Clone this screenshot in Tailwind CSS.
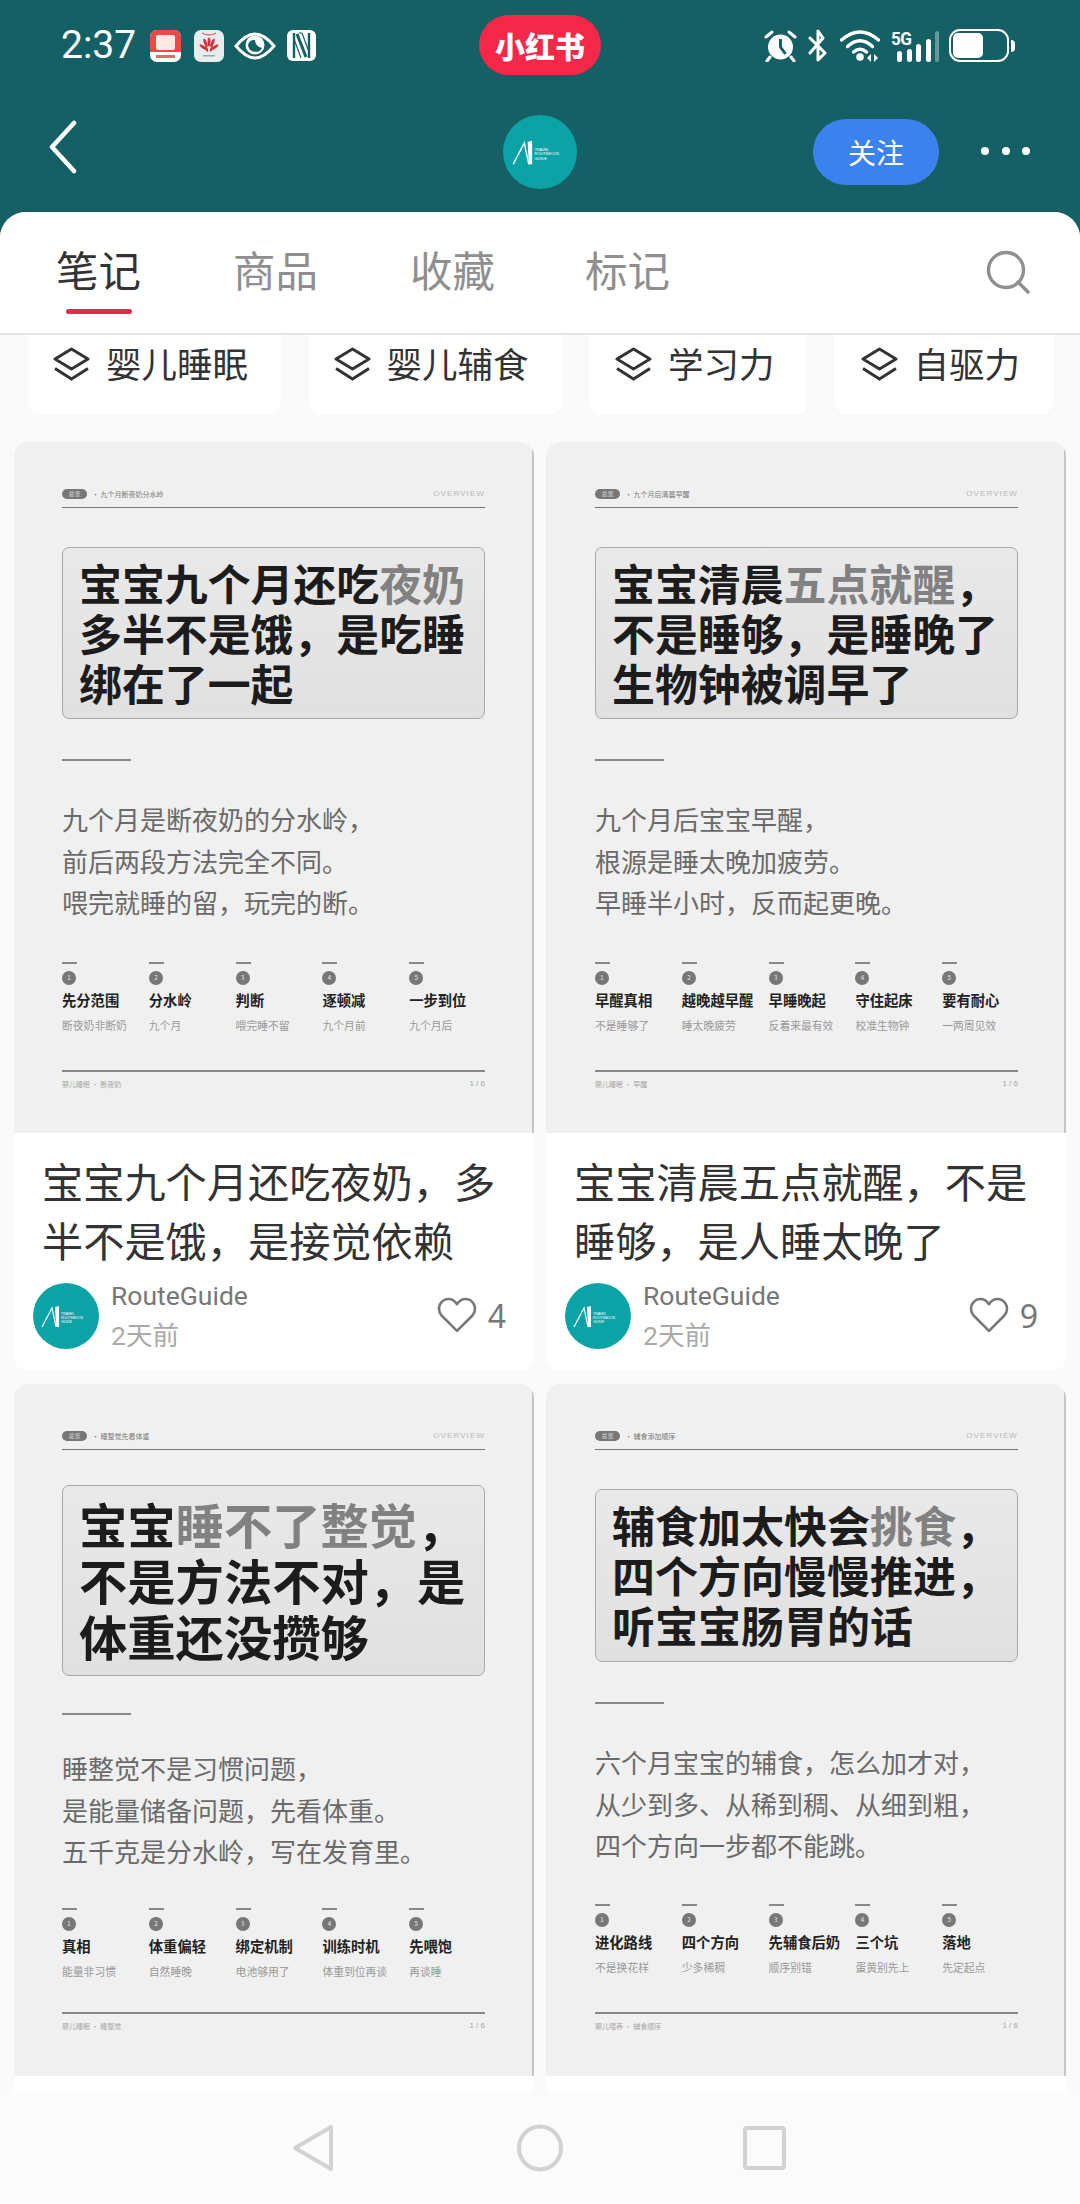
<!DOCTYPE html>
<html lang="zh-CN">
<head>
<meta charset="utf-8">
<title>RouteGuide</title>
<script src="https://cdn.jsdelivr.net/npm/@tailwindcss/browser@4"></script>
</head>
<body class="m-0">
<div class="relative w-[1080px] h-[2204px] overflow-hidden flex flex-col bg-[#156064] font-['Noto_Sans_CJK_SC','Noto_Sans',sans-serif]">

  <!-- header -->
  <header class="relative h-[212px] shrink-0 text-white">
    <div class="relative flex items-center h-[90px] pl-[61px] pt-[1px]">
      <span class="font-['Roboto',sans-serif] text-[39px] leading-none w-[89px]">2:37</span>
      <svg class="w-[31px] h-[32px]" viewBox="0 0 31 32"><rect width="31" height="32" rx="7" fill="#fff"/><path d="M0 7a7 7 0 0 1 7-7h17a7 7 0 0 1 7 7v15H0z" fill="#ee4a45"/><rect x="6" y="5" width="19" height="15" rx="2" fill="#fde9e6"/><rect x="6" y="25" width="19" height="3" fill="#e46a66"/></svg>
      <svg class="ml-[13px] w-[30px] h-[32px]" viewBox="0 0 30 32"><rect width="30" height="32" rx="7" fill="#e8eced"/><path d="M8 3q7 4 14 0" fill="none" stroke="#d8464a" stroke-width="1"/><g fill="#d3333c"><ellipse cx="15" cy="12" rx="1.5" ry="4.5"/><ellipse cx="11.5" cy="13" rx="1.5" ry="4.5" transform="rotate(-22 11.5 13)"/><ellipse cx="18.5" cy="13" rx="1.5" ry="4.5" transform="rotate(22 18.5 13)"/><ellipse cx="9" cy="17" rx="1.4" ry="4" transform="rotate(-55 9 17)"/><ellipse cx="21" cy="17" rx="1.4" ry="4" transform="rotate(55 21 17)"/><ellipse cx="12.5" cy="19" rx="1.3" ry="3" transform="rotate(-30 12.5 19)"/><ellipse cx="17.5" cy="19" rx="1.3" ry="3" transform="rotate(30 17.5 19)"/></g><rect x="9" y="25" width="12" height="1.5" fill="#9aa"/></svg>
      <svg class="ml-[10px] w-[42px] h-[28px]" viewBox="0 0 42 28"><path d="M2 14Q12 2 21 2T40 14Q30 26 21 26T2 14Z" fill="none" stroke="#fff" stroke-width="3"/><circle cx="21" cy="13" r="9.5" fill="#fff"/><path d="M14 13a7.5 7.5 0 0 0 14 3 8 8 0 0 1-7-8 6 6 0 0 0-7 5z" fill="#156064"/></svg>
      <svg class="ml-[11px] w-[29px] h-[31px]" viewBox="0 0 29 31"><rect width="29" height="31" rx="6" fill="#fff"/><path d="M7 3v25M22 3v25" stroke="#156064" stroke-width="2.4"/><path d="M10 4l9 23" stroke="#156064" stroke-width="3" fill="none"/><path d="M12 3h3l7 19M7 9l7 19" fill="none" stroke="#156064" stroke-width="1.2"/></svg>

      <div class="absolute left-[479px] top-[15px] w-[122px] h-[60px] rounded-full bg-[#f5284a] flex items-center justify-center text-[30px] leading-none font-black">小红书</div>

      <div class="absolute left-[764px] top-[29px] flex">
        <svg class="w-[33px] h-[33px]" viewBox="0 0 33 33"><circle cx="16.5" cy="18" r="12.5" fill="#fff"/><path d="M16.5 10v8l5 7" fill="none" stroke="#156064" stroke-width="3"/><path d="M2 8l6-5M31 8l-6-5M6 28l-3 4M27 28l3 4" stroke="#fff" stroke-width="3" stroke-linecap="round"/></svg>
        <svg class="ml-[11px] w-[20px] h-[33px]" viewBox="0 0 20 33"><path d="M2 24L15 9 10 2v29l7-7L2 9" fill="none" stroke="#fff" stroke-width="3" stroke-linejoin="round" stroke-linecap="round"/></svg>
        <svg class="ml-[12px] w-[40px] h-[33px]" viewBox="0 0 40 33"><path d="M1.5 11Q20-5 38.5 11" fill="none" stroke="#fff" stroke-width="3.4" stroke-linecap="round"/><path d="M7.5 17.500Q20 6 32.500 17.500" fill="none" stroke="#fff" stroke-width="3.4" stroke-linecap="round"/><path d="M13.500 23Q20 17.500 26.500 23" fill="none" stroke="#fff" stroke-width="3.4" stroke-linecap="round"/><circle cx="20" cy="28" r="3.800" fill="#fff"/><path d="M31 25l-4 4 4 4zM34 25l4 4-4 4z" fill="#fff"/></svg>
      </div>
      <div class="absolute left-[891px] top-[29px] w-[50px] h-[33px]">
        <span class="absolute left-[0px] top-[1px] font-['Roboto',sans-serif] text-[18px] leading-[17px] font-bold tracking-[-0.5px] scale-x-[0.95] origin-left">5G</span>
        <div class="absolute left-[6px] bottom-[0px] flex items-end gap-[4.500px]">
          <i class="block w-[5px] h-[11px] rounded-sm bg-white"></i>
          <i class="block w-[5px] h-[13px] rounded-sm bg-white"></i>
          <i class="block w-[5px] h-[18px] rounded-sm bg-white"></i>
          <i class="block w-[5px] h-[23px] rounded-sm bg-white"></i>
          <i class="block w-[4px] h-[31px] rounded-sm bg-white/35"></i>
        </div>
      </div>
      <div class="absolute left-[949px] top-[29px] flex items-center">
        <div class="w-[60px] h-[33px] rounded-[11px] border-[2.5px] border-white p-[2px]"><div class="w-[30px] h-full rounded-[5px] bg-white"></div></div>
        <div class="ml-[2px] w-[4px] h-[12px] rounded-r-sm bg-white"></div>
      </div>
    </div>

    <div class="relative flex items-center justify-between h-[122px] pl-[48px] pr-[50px]">
      <svg class="w-[30px] h-[54px] mb-[8px]" viewBox="0 0 30 54"><path d="M26 3L4 27l22 24" fill="none" stroke="#fff" stroke-width="4.500" stroke-linecap="round" stroke-linejoin="round"/></svg>
      <svg class="absolute left-[503px] top-[25px] w-[74px] h-[74px]" viewBox="0 0 66 66"><circle cx="33" cy="33" r="33" fill="#0ca3a6"/><path d="M9 44L19 25l4 19" fill="none" stroke="#fff" stroke-width="1.200"/><path d="M22 24l4-1v21h-3z" fill="#fff"/><text x="28" y="32" font-size="3.500" fill="#fff" font-family="Liberation Sans">TRAVEL</text><text x="28" y="36" font-size="3.500" fill="#fff" font-family="Liberation Sans">ROUTEBOOK</text><text x="28" y="40" font-size="3.500" fill="#fff" font-family="Liberation Sans">GUIDE</text></svg>
      <div class="ml-auto flex items-center">
        <div class="mt-[2px] w-[126px] h-[66px] rounded-full bg-[#3b82ee] flex items-center justify-center text-[28px] leading-none">关注</div>
        <div class="ml-[42px] flex gap-[12.500px]">
          <i class="block w-[8px] h-[8px] rounded-full bg-white"></i>
          <i class="block w-[8px] h-[8px] rounded-full bg-white"></i>
          <i class="block w-[8px] h-[8px] rounded-full bg-white"></i>
        </div>
      </div>
    </div>
  </header>

  <!-- sheet -->
  <div class="flex-1 min-h-0 flex flex-col rounded-t-[26px] overflow-hidden bg-[#fafafa]">
    <div class="relative h-[123px] shrink-0 bg-white border-b-2 border-[#e6e6e6] text-[42.500px] leading-none text-[#8f8f8f]">
      <span class="absolute left-[56px] top-[36px] text-[#333]">笔记</span>
      <span class="absolute left-[233px] top-[36px]">商品</span>
      <span class="absolute left-[410px] top-[36px]">收藏</span>
      <span class="absolute left-[585px] top-[36px]">标记</span>
      <i class="absolute left-[66px] top-[97px] block w-[66px] h-[5px] rounded-full bg-[#e8294f]"></i>
      <svg class="absolute left-[986px] top-[38px] w-[44px] h-[44px]" viewBox="0 0 44 44"><circle cx="20" cy="20" r="17.500" fill="none" stroke="#8f8f8f" stroke-width="3.400"/><path d="M32 32l10 10" stroke="#8f8f8f" stroke-width="3.400" stroke-linecap="round"/></svg>
    </div>

    <div class="flex-1 min-h-0 overflow-hidden">
      <!-- chips -->
      <div class="flex gap-[27.500px] pl-[28px] h-[79px] text-[35.500px] leading-none text-[#333]">
        <div class="w-[253px] h-full rounded-b-[12px] bg-white flex items-start pt-[11px] pl-[25px] gap-[16px]">
          <svg class="mt-[1px] w-[37px] h-[34px] shrink-0" viewBox="0 0 37 34"><path d="M18.500 2L35 12 18.500 22 2 12z" fill="none" stroke="#333" stroke-width="3" stroke-linejoin="round"/><path d="M2 21.500L18.500 32 35 21.500" fill="none" stroke="#333" stroke-width="3"/></svg>
          <span class="-mt-[1.500px] whitespace-nowrap">婴儿睡眠</span>
        </div>
        <div class="w-[253px] h-full rounded-b-[12px] bg-white flex items-start pt-[11px] pl-[25px] gap-[16px]">
          <svg class="mt-[1px] w-[37px] h-[34px] shrink-0" viewBox="0 0 37 34"><path d="M18.500 2L35 12 18.500 22 2 12z" fill="none" stroke="#333" stroke-width="3" stroke-linejoin="round"/><path d="M2 21.500L18.500 32 35 21.500" fill="none" stroke="#333" stroke-width="3"/></svg>
          <span class="-mt-[1.500px] whitespace-nowrap">婴儿辅食</span>
        </div>
        <div class="w-[218px] h-full rounded-b-[12px] bg-white flex items-start pt-[11px] pl-[26px] gap-[16px]">
          <svg class="mt-[1px] w-[37px] h-[34px] shrink-0" viewBox="0 0 37 34"><path d="M18.500 2L35 12 18.500 22 2 12z" fill="none" stroke="#333" stroke-width="3" stroke-linejoin="round"/><path d="M2 21.500L18.500 32 35 21.500" fill="none" stroke="#333" stroke-width="3"/></svg>
          <span class="-mt-[1.500px] whitespace-nowrap">学习力</span>
        </div>
        <div class="w-[218px] h-full rounded-b-[12px] bg-white flex items-start pt-[11px] pl-[26px] gap-[16px]">
          <svg class="mt-[1px] w-[37px] h-[34px] shrink-0" viewBox="0 0 37 34"><path d="M18.500 2L35 12 18.500 22 2 12z" fill="none" stroke="#333" stroke-width="3" stroke-linejoin="round"/><path d="M2 21.500L18.500 32 35 21.500" fill="none" stroke="#333" stroke-width="3"/></svg>
          <span class="-mt-[1.500px] whitespace-nowrap">自驱力</span>
        </div>
      </div>

      <!-- cards -->
      <div class="grid grid-cols-[520px_520px] gap-x-[12px] gap-y-[13px] px-[14px] pt-[28px]">

        <!-- card 1 -->
        <article class="rounded-[14px] overflow-hidden bg-white">
          <div class="h-[691px] flex flex-col bg-[#f0f0f0] border-r-2 border-[#c6c6c6] pl-[48px] pr-[47px] pt-[47px] pb-[43px]">
            <div class="flex items-center justify-between h-[19px] pb-[9px] border-b-[1.500px] border-[#777] whitespace-nowrap">
              <div class="flex items-center gap-[5px] text-[7px] leading-[10px] text-[#777]"><span class="w-[25px] h-[10px] rounded-full bg-[#777] text-center text-[6px] text-[#ddd]">总览</span>· 九个月断夜奶分水岭</div>
              <span class="font-['Liberation_Sans',sans-serif] text-[8px] leading-[10px] tracking-[1.100px] text-[#b8b8b8]">OVERVIEW</span>
            </div>
            <div class="mt-[39px] h-[172px] rounded-[7px] border border-[#a8a8a8] bg-linear-to-b from-[#e9e9e9] to-[#e0e0e0] pl-[16px] pt-[8.500px] text-[42.900px] leading-[50px] font-bold text-[#1c1c1c] whitespace-nowrap">宝宝九个月还吃<span class="text-[#818181]">夜奶</span><br>多半不是饿，是吃睡<br>绑在了一起</div>
            <i class="block mt-[40px] w-[69px] h-[2px] bg-[#888]"></i>
            <p class="mt-[37px] text-[26px] leading-[41.500px] text-[#6a6a6a] whitespace-nowrap">九个月是断夜奶的分水岭，<br>前后两段方法完全不同。<br>喂完就睡的留，玩完的断。</p>
            <div class="mt-[39.500px] grid grid-cols-[repeat(5,86.800px)] whitespace-nowrap">
              <div><i class="block w-[15px] h-[2px] bg-[#888]"></i><span class="block mt-[7px] w-[14px] h-[14px] rounded-full bg-[#777] text-center text-[6px] leading-[14px] text-[#eee]">1</span><b class="block mt-[5px] text-[14.300px] leading-[20px] text-[#222]">先分范围</b><span class="block mt-[7.500px] text-[10.800px] leading-[14px] text-[#999]">断夜奶非断奶</span></div>
              <div><i class="block w-[15px] h-[2px] bg-[#888]"></i><span class="block mt-[7px] w-[14px] h-[14px] rounded-full bg-[#777] text-center text-[6px] leading-[14px] text-[#eee]">2</span><b class="block mt-[5px] text-[14.300px] leading-[20px] text-[#222]">分水岭</b><span class="block mt-[7.500px] text-[10.800px] leading-[14px] text-[#999]">九个月</span></div>
              <div><i class="block w-[15px] h-[2px] bg-[#888]"></i><span class="block mt-[7px] w-[14px] h-[14px] rounded-full bg-[#777] text-center text-[6px] leading-[14px] text-[#eee]">3</span><b class="block mt-[5px] text-[14.300px] leading-[20px] text-[#222]">判断</b><span class="block mt-[7.500px] text-[10.800px] leading-[14px] text-[#999]">喂完睡不留</span></div>
              <div><i class="block w-[15px] h-[2px] bg-[#888]"></i><span class="block mt-[7px] w-[14px] h-[14px] rounded-full bg-[#777] text-center text-[6px] leading-[14px] text-[#eee]">4</span><b class="block mt-[5px] text-[14.300px] leading-[20px] text-[#222]">逐顿减</b><span class="block mt-[7.500px] text-[10.800px] leading-[14px] text-[#999]">九个月前</span></div>
              <div><i class="block w-[15px] h-[2px] bg-[#888]"></i><span class="block mt-[7px] w-[14px] h-[14px] rounded-full bg-[#777] text-center text-[6px] leading-[14px] text-[#eee]">5</span><b class="block mt-[5px] text-[14.300px] leading-[20px] text-[#222]">一步到位</b><span class="block mt-[7.500px] text-[10.800px] leading-[14px] text-[#999]">九个月后</span></div>
            </div>
            <div class="mt-auto flex justify-between items-center border-t-2 border-[#888] pt-[6px] text-[7px] leading-[12px] text-[#a5a5a5] whitespace-nowrap"><span>婴儿睡眠 · 断夜奶</span><span class="font-['Liberation_Sans',sans-serif] text-[8px]">1 / 6</span></div>
          </div>
          <div class="h-[238px] pt-[18px] text-[#777]">
            <h2 class="pl-[28px] text-[41.200px] leading-[58.500px] font-normal text-[#333] whitespace-nowrap">宝宝九个月还吃夜奶，多<br>半不是饿，是接觉依赖</h2>
            <div class="mt-[14.500px] flex items-center h-[66px] pl-[19px] pr-[28px]">
              <svg class="w-[66px] h-[66px] shrink-0" viewBox="0 0 66 66"><circle cx="33" cy="33" r="33" fill="#0ca3a6"/><path d="M9 44L19 25l4 19" fill="none" stroke="#fff" stroke-width="1.200"/><path d="M22 24l4-1v21h-3z" fill="#fff"/><text x="28" y="32" font-size="3.500" fill="#fff" font-family="Liberation Sans">TRAVEL</text><text x="28" y="36" font-size="3.500" fill="#fff" font-family="Liberation Sans">ROUTEBOOK</text><text x="28" y="40" font-size="3.500" fill="#fff" font-family="Liberation Sans">GUIDE</text></svg>
              <div class="ml-[12px] text-[26.500px] leading-[40px] font-['Roboto','Noto_Sans_CJK_SC',sans-serif]"><div>RouteGuide</div><div class="text-[#aaa]">2天前</div></div>
              <svg class="ml-auto w-[42px] h-[37px]" viewBox="0 0 40 36"><path d="M20 33L5 18C-1 10 5 2 12 2c4 0 6 2 8 5 2-3 4-5 8-5 7 0 13 8 7 16z" fill="none" stroke="#777" stroke-width="2.500" stroke-linejoin="round"/></svg>
              <span class="ml-[10px] font-['Noto_Sans',sans-serif] text-[32px] leading-none">4</span>
            </div>
          </div>
        </article>

        <!-- card 2 -->
        <article class="rounded-[14px] overflow-hidden bg-white">
          <div class="h-[691px] flex flex-col bg-[#f0f0f0] border-r-2 border-[#c6c6c6] pl-[49px] pr-[46px] pt-[47px] pb-[43px]">
            <div class="flex items-center justify-between h-[19px] pb-[9px] border-b-[1.500px] border-[#777] whitespace-nowrap">
              <div class="flex items-center gap-[5px] text-[7px] leading-[10px] text-[#777]"><span class="w-[25px] h-[10px] rounded-full bg-[#777] text-center text-[6px] text-[#ddd]">总览</span>· 九个月后清晨早醒</div>
              <span class="font-['Liberation_Sans',sans-serif] text-[8px] leading-[10px] tracking-[1.100px] text-[#b8b8b8]">OVERVIEW</span>
            </div>
            <div class="mt-[39px] h-[172px] rounded-[7px] border border-[#a8a8a8] bg-linear-to-b from-[#e9e9e9] to-[#e0e0e0] pl-[16px] pt-[8.500px] text-[42.900px] leading-[50px] font-bold text-[#1c1c1c] whitespace-nowrap">宝宝清晨<span class="text-[#818181]">五点就醒</span>，<br>不是睡够，是睡晚了<br>生物钟被调早了</div>
            <i class="block mt-[40px] w-[69px] h-[2px] bg-[#888]"></i>
            <p class="mt-[37px] text-[26px] leading-[41.500px] text-[#6a6a6a] whitespace-nowrap">九个月后宝宝早醒，<br>根源是睡太晚加疲劳。<br>早睡半小时，反而起更晚。</p>
            <div class="mt-[39.500px] grid grid-cols-[repeat(5,86.800px)] whitespace-nowrap">
              <div><i class="block w-[15px] h-[2px] bg-[#888]"></i><span class="block mt-[7px] w-[14px] h-[14px] rounded-full bg-[#777] text-center text-[6px] leading-[14px] text-[#eee]">1</span><b class="block mt-[5px] text-[14.300px] leading-[20px] text-[#222]">早醒真相</b><span class="block mt-[7.500px] text-[10.800px] leading-[14px] text-[#999]">不是睡够了</span></div>
              <div><i class="block w-[15px] h-[2px] bg-[#888]"></i><span class="block mt-[7px] w-[14px] h-[14px] rounded-full bg-[#777] text-center text-[6px] leading-[14px] text-[#eee]">2</span><b class="block mt-[5px] text-[14.300px] leading-[20px] text-[#222]">越晚越早醒</b><span class="block mt-[7.500px] text-[10.800px] leading-[14px] text-[#999]">睡太晚疲劳</span></div>
              <div><i class="block w-[15px] h-[2px] bg-[#888]"></i><span class="block mt-[7px] w-[14px] h-[14px] rounded-full bg-[#777] text-center text-[6px] leading-[14px] text-[#eee]">3</span><b class="block mt-[5px] text-[14.300px] leading-[20px] text-[#222]">早睡晚起</b><span class="block mt-[7.500px] text-[10.800px] leading-[14px] text-[#999]">反着来最有效</span></div>
              <div><i class="block w-[15px] h-[2px] bg-[#888]"></i><span class="block mt-[7px] w-[14px] h-[14px] rounded-full bg-[#777] text-center text-[6px] leading-[14px] text-[#eee]">4</span><b class="block mt-[5px] text-[14.300px] leading-[20px] text-[#222]">守住起床</b><span class="block mt-[7.500px] text-[10.800px] leading-[14px] text-[#999]">校准生物钟</span></div>
              <div><i class="block w-[15px] h-[2px] bg-[#888]"></i><span class="block mt-[7px] w-[14px] h-[14px] rounded-full bg-[#777] text-center text-[6px] leading-[14px] text-[#eee]">5</span><b class="block mt-[5px] text-[14.300px] leading-[20px] text-[#222]">要有耐心</b><span class="block mt-[7.500px] text-[10.800px] leading-[14px] text-[#999]">一两周见效</span></div>
            </div>
            <div class="mt-auto flex justify-between items-center border-t-2 border-[#888] pt-[6px] text-[7px] leading-[12px] text-[#a5a5a5] whitespace-nowrap"><span>婴儿睡眠 · 早醒</span><span class="font-['Liberation_Sans',sans-serif] text-[8px]">1 / 6</span></div>
          </div>
          <div class="h-[238px] pt-[18px] text-[#777]">
            <h2 class="pl-[28px] text-[41.200px] leading-[58.500px] font-normal text-[#333] whitespace-nowrap">宝宝清晨五点就醒，不是<br>睡够，是人睡太晚了</h2>
            <div class="mt-[14.500px] flex items-center h-[66px] pl-[19px] pr-[28px]">
              <svg class="w-[66px] h-[66px] shrink-0" viewBox="0 0 66 66"><circle cx="33" cy="33" r="33" fill="#0ca3a6"/><path d="M9 44L19 25l4 19" fill="none" stroke="#fff" stroke-width="1.200"/><path d="M22 24l4-1v21h-3z" fill="#fff"/><text x="28" y="32" font-size="3.500" fill="#fff" font-family="Liberation Sans">TRAVEL</text><text x="28" y="36" font-size="3.500" fill="#fff" font-family="Liberation Sans">ROUTEBOOK</text><text x="28" y="40" font-size="3.500" fill="#fff" font-family="Liberation Sans">GUIDE</text></svg>
              <div class="ml-[12px] text-[26.500px] leading-[40px] font-['Roboto','Noto_Sans_CJK_SC',sans-serif]"><div>RouteGuide</div><div class="text-[#aaa]">2天前</div></div>
              <svg class="ml-auto w-[42px] h-[37px]" viewBox="0 0 40 36"><path d="M20 33L5 18C-1 10 5 2 12 2c4 0 6 2 8 5 2-3 4-5 8-5 7 0 13 8 7 16z" fill="none" stroke="#777" stroke-width="2.500" stroke-linejoin="round"/></svg>
              <span class="ml-[10px] font-['Noto_Sans',sans-serif] text-[32px] leading-none">9</span>
            </div>
          </div>
        </article>

        <!-- card 3 -->
        <article class="rounded-[14px] overflow-hidden bg-white">
          <div class="h-[692px] flex flex-col bg-[#f0f0f0] border-r-2 border-[#c6c6c6] pl-[48px] pr-[47px] pt-[47px] pb-[44px]">
            <div class="flex items-center justify-between h-[19px] pb-[9px] border-b-[1.500px] border-[#777] whitespace-nowrap">
              <div class="flex items-center gap-[5px] text-[7px] leading-[10px] text-[#777]"><span class="w-[25px] h-[10px] rounded-full bg-[#777] text-center text-[6px] text-[#ddd]">总览</span>· 睡整觉先看体重</div>
              <span class="font-['Liberation_Sans',sans-serif] text-[8px] leading-[10px] tracking-[1.100px] text-[#b8b8b8]">OVERVIEW</span>
            </div>
            <div class="mt-[35px] h-[191px] rounded-[7px] border border-[#a8a8a8] bg-linear-to-b from-[#e9e9e9] to-[#e0e0e0] pl-[16px] pt-[8.500px] text-[48.300px] leading-[56px] font-bold text-[#1c1c1c] whitespace-nowrap">宝宝<span class="text-[#818181]">睡不了整觉</span>，<br>不是方法不对，是<br>体重还没攒够</div>
            <i class="block mt-[37px] w-[69px] h-[2px] bg-[#888]"></i>
            <p class="mt-[32px] text-[26px] leading-[41.500px] text-[#6a6a6a] whitespace-nowrap">睡整觉不是习惯问题，<br>是能量储备问题，先看体重。<br>五千克是分水岭，写在发育里。</p>
            <div class="mt-[36.500px] grid grid-cols-[repeat(5,86.800px)] whitespace-nowrap">
              <div><i class="block w-[15px] h-[2px] bg-[#888]"></i><span class="block mt-[7px] w-[14px] h-[14px] rounded-full bg-[#777] text-center text-[6px] leading-[14px] text-[#eee]">1</span><b class="block mt-[5px] text-[14.300px] leading-[20px] text-[#222]">真相</b><span class="block mt-[7.500px] text-[10.800px] leading-[14px] text-[#999]">能量非习惯</span></div>
              <div><i class="block w-[15px] h-[2px] bg-[#888]"></i><span class="block mt-[7px] w-[14px] h-[14px] rounded-full bg-[#777] text-center text-[6px] leading-[14px] text-[#eee]">2</span><b class="block mt-[5px] text-[14.300px] leading-[20px] text-[#222]">体重偏轻</b><span class="block mt-[7.500px] text-[10.800px] leading-[14px] text-[#999]">自然睡晚</span></div>
              <div><i class="block w-[15px] h-[2px] bg-[#888]"></i><span class="block mt-[7px] w-[14px] h-[14px] rounded-full bg-[#777] text-center text-[6px] leading-[14px] text-[#eee]">3</span><b class="block mt-[5px] text-[14.300px] leading-[20px] text-[#222]">绑定机制</b><span class="block mt-[7.500px] text-[10.800px] leading-[14px] text-[#999]">电池够用了</span></div>
              <div><i class="block w-[15px] h-[2px] bg-[#888]"></i><span class="block mt-[7px] w-[14px] h-[14px] rounded-full bg-[#777] text-center text-[6px] leading-[14px] text-[#eee]">4</span><b class="block mt-[5px] text-[14.300px] leading-[20px] text-[#222]">训练时机</b><span class="block mt-[7.500px] text-[10.800px] leading-[14px] text-[#999]">体重到位再谈</span></div>
              <div><i class="block w-[15px] h-[2px] bg-[#888]"></i><span class="block mt-[7px] w-[14px] h-[14px] rounded-full bg-[#777] text-center text-[6px] leading-[14px] text-[#eee]">5</span><b class="block mt-[5px] text-[14.300px] leading-[20px] text-[#222]">先喂饱</b><span class="block mt-[7.500px] text-[10.800px] leading-[14px] text-[#999]">再谈睡</span></div>
            </div>
            <div class="mt-auto flex justify-between items-center border-t-2 border-[#888] pt-[6px] text-[7px] leading-[12px] text-[#a5a5a5] whitespace-nowrap"><span>婴儿睡眠 · 睡整觉</span><span class="font-['Liberation_Sans',sans-serif] text-[8px]">1 / 6</span></div>
          </div>
          <div class="h-[238px]"></div>
        </article>

        <!-- card 4 -->
        <article class="rounded-[14px] overflow-hidden bg-white">
          <div class="h-[692px] flex flex-col bg-[#f0f0f0] border-r-2 border-[#c6c6c6] pl-[49px] pr-[46px] pt-[47px] pb-[44px]">
            <div class="flex items-center justify-between h-[19px] pb-[9px] border-b-[1.500px] border-[#777] whitespace-nowrap">
              <div class="flex items-center gap-[5px] text-[7px] leading-[10px] text-[#777]"><span class="w-[25px] h-[10px] rounded-full bg-[#777] text-center text-[6px] text-[#ddd]">总览</span>· 辅食添加顺序</div>
              <span class="font-['Liberation_Sans',sans-serif] text-[8px] leading-[10px] tracking-[1.100px] text-[#b8b8b8]">OVERVIEW</span>
            </div>
            <div class="mt-[39px] h-[173px] rounded-[7px] border border-[#a8a8a8] bg-linear-to-b from-[#e9e9e9] to-[#e0e0e0] pl-[16px] pt-[8.500px] text-[43px] leading-[50px] font-bold text-[#1c1c1c] whitespace-nowrap">辅食加太快会<span class="text-[#818181]">挑食</span>，<br>四个方向慢慢推进，<br>听宝宝肠胃的话</div>
            <i class="block mt-[40px] w-[69px] h-[2px] bg-[#888]"></i>
            <p class="mt-[37px] text-[26px] leading-[41.500px] text-[#6a6a6a] whitespace-nowrap">六个月宝宝的辅食，怎么加才对，<br>从少到多、从稀到稠、从细到粗，<br>四个方向一步都不能跳。</p>
            <div class="mt-[38.500px] grid grid-cols-[repeat(5,86.800px)] whitespace-nowrap">
              <div><i class="block w-[15px] h-[2px] bg-[#888]"></i><span class="block mt-[7px] w-[14px] h-[14px] rounded-full bg-[#777] text-center text-[6px] leading-[14px] text-[#eee]">1</span><b class="block mt-[5px] text-[14.300px] leading-[20px] text-[#222]">进化路线</b><span class="block mt-[7.500px] text-[10.800px] leading-[14px] text-[#999]">不是换花样</span></div>
              <div><i class="block w-[15px] h-[2px] bg-[#888]"></i><span class="block mt-[7px] w-[14px] h-[14px] rounded-full bg-[#777] text-center text-[6px] leading-[14px] text-[#eee]">2</span><b class="block mt-[5px] text-[14.300px] leading-[20px] text-[#222]">四个方向</b><span class="block mt-[7.500px] text-[10.800px] leading-[14px] text-[#999]">少多稀稠</span></div>
              <div><i class="block w-[15px] h-[2px] bg-[#888]"></i><span class="block mt-[7px] w-[14px] h-[14px] rounded-full bg-[#777] text-center text-[6px] leading-[14px] text-[#eee]">3</span><b class="block mt-[5px] text-[14.300px] leading-[20px] text-[#222]">先辅食后奶</b><span class="block mt-[7.500px] text-[10.800px] leading-[14px] text-[#999]">顺序别错</span></div>
              <div><i class="block w-[15px] h-[2px] bg-[#888]"></i><span class="block mt-[7px] w-[14px] h-[14px] rounded-full bg-[#777] text-center text-[6px] leading-[14px] text-[#eee]">4</span><b class="block mt-[5px] text-[14.300px] leading-[20px] text-[#222]">三个坑</b><span class="block mt-[7.500px] text-[10.800px] leading-[14px] text-[#999]">蛋黄别先上</span></div>
              <div><i class="block w-[15px] h-[2px] bg-[#888]"></i><span class="block mt-[7px] w-[14px] h-[14px] rounded-full bg-[#777] text-center text-[6px] leading-[14px] text-[#eee]">5</span><b class="block mt-[5px] text-[14.300px] leading-[20px] text-[#222]">落地</b><span class="block mt-[7.500px] text-[10.800px] leading-[14px] text-[#999]">先定起点</span></div>
            </div>
            <div class="mt-auto flex justify-between items-center border-t-2 border-[#888] pt-[6px] text-[7px] leading-[12px] text-[#a5a5a5] whitespace-nowrap"><span>婴儿喂养 · 辅食顺序</span><span class="font-['Liberation_Sans',sans-serif] text-[8px]">1 / 6</span></div>
          </div>
          <div class="h-[238px]"></div>
        </article>
      </div>
    </div>

    <!-- nav bar -->
    <nav class="relative h-[112px] shrink-0 bg-[#fbfbfb]">
      <svg class="absolute left-[292px] top-[32px] w-[42px] h-[48px]" viewBox="0 0 42 48"><path d="M39 3L3 24l36 21z" fill="none" stroke="#d2d2d2" stroke-width="4" stroke-linejoin="round"/></svg>
      <svg class="absolute left-[517px] top-[32px] w-[46px] h-[48px]" viewBox="0 0 46 48"><ellipse cx="23" cy="24" rx="21" ry="21.500" fill="none" stroke="#d2d2d2" stroke-width="4"/></svg>
      <svg class="absolute left-[743px] top-[34px] w-[43px] h-[44px]" viewBox="0 0 43 44"><rect x="2" y="2" width="39" height="40" rx="2" fill="none" stroke="#d2d2d2" stroke-width="4"/></svg>
    </nav>
  </div>
</div>
</body>
</html>
